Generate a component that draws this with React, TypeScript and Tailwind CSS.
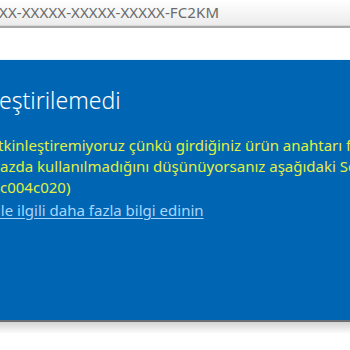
export default function App() {
  return (
    <div className="w-[350px] h-[350px] overflow-hidden bg-white flex flex-col font-['Noto_Sans',sans-serif]">
      {/* product key input */}
      <div className="h-[25px] shrink-0 bg-gradient-to-b from-white to-[#ececec] flex items-center">
        <span className="-ml-[1px] text-[15px] leading-none tracking-[0.1px] text-[#6a6a6a] whitespace-nowrap">
          XX-XXXXX-XXXXX-XXXXX-FC2KM
        </span>
      </div>
      <div className="h-[1px] shrink-0 bg-[#d8d8d8]" />
      <div className="h-[2px] shrink-0 bg-[#a9a9a9]" />
      <div className="h-[32px] shrink-0 bg-white border-b border-[#e6f6fb]" />

      {/* error panel */}
      <div className="h-[260px] shrink-0 bg-[#0066b3] pt-[24px] overflow-hidden">
        <div className="-ml-[1px] text-[23px] leading-[32px] font-light text-white whitespace-nowrap">
          eştirilemedi
        </div>
        <div className="mt-[19px] text-[15px] leading-[21px] text-[#e3ef3f] whitespace-nowrap">
          <div className="-ml-[2px]">tkinleştiremiyoruz çünkü girdiğiniz ürün anahtarı farklı</div>
          <div>azda kullanılmadığını düşünüyorsanız aşağıdaki Sorun</div>
          <div>c004c020)</div>
        </div>
        <div className="mt-[2px] text-[15px] leading-[21px] text-[#a9d6ff] underline underline-offset-2 whitespace-nowrap -ml-[3px]">
          {" "}ile ilgili daha fazla bilgi edinin
        </div>
      </div>
      <div className="h-[2px] shrink-0 bg-[#6b6f73]" />
      <div className="h-[12px] shrink-0 bg-gradient-to-b from-[#d4d4d4] to-white" />
    </div>
  );
}
